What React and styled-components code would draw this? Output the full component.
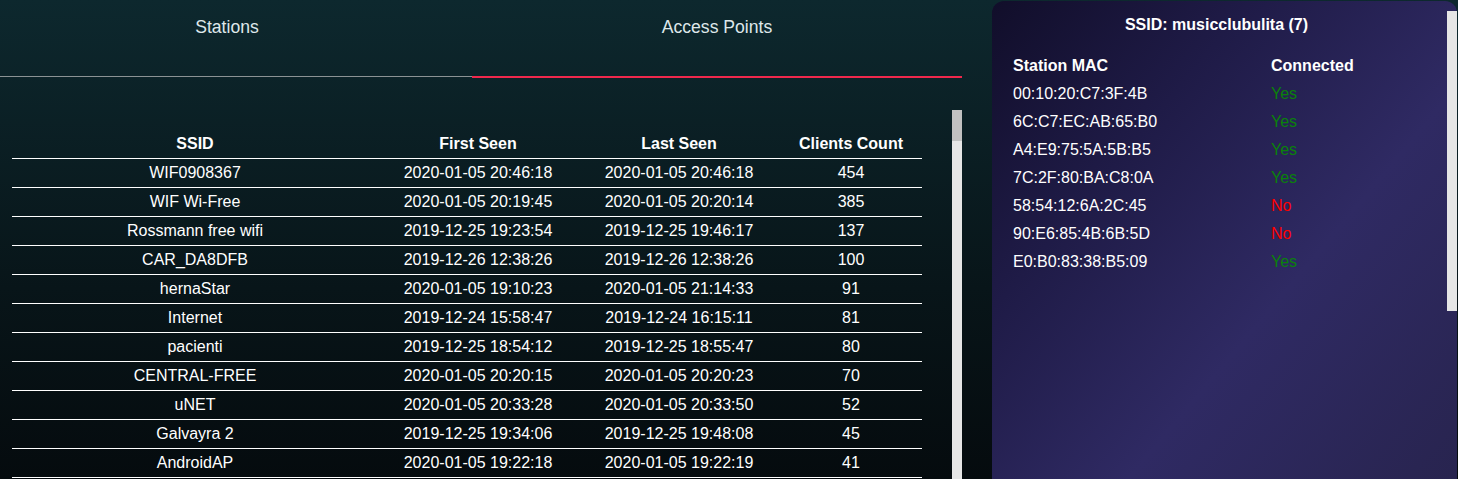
import React from "react";
import styled, { createGlobalStyle } from "styled-components";

const Global = createGlobalStyle`
  html, body {
    margin: 0;
    padding: 0;
    height: 479px;
    overflow: hidden;
  }
  body {
    background: linear-gradient(to bottom, #0d282e 0%, #081519 60%, #050b0e 100%);
    font-family: "Liberation Sans", Arial, sans-serif;
    color: #ffffff;
  }
`;

const Page = styled.div`
  display: flex;
  align-items: flex-start;
  height: 479px;
`;

const Main = styled.div`
  width: 962px;
  display: flex;
  flex-direction: column;
  height: 479px;
`;

const TabBar = styled.div`
  display: grid;
  grid-template-columns: 472px 490px;
  align-items: start;
`;

const Tab = styled.div`
  box-sizing: border-box;
  height: ${(p) => (p.$active ? 78 : 77)}px;
  padding-top: 17px;
  padding-right: ${(p) => p.$shift || 0}px;
  display: flex;
  justify-content: center;
  align-items: flex-start;
  font-size: 17.6px;
  line-height: 20px;
  color: #dfe7ea;
  border-bottom: ${(p) => (p.$active ? "2px solid #f0284c" : "1px solid #8b9294")};
`;

const TableArea = styled.div`
  margin-top: 32px;
  padding-left: 12px;
  display: flex;
  flex: 1;
  min-height: 0;
`;

const TableWrap = styled.div`
  flex: 1;
  padding-top: 18px;
  overflow: hidden;
`;

const Table = styled.table`
  width: 910px;
  border-collapse: collapse;
  table-layout: fixed;
  font-size: 16px;
`;

const Th = styled.th`
  font-weight: bold;
  line-height: 18px;
  padding: 7px 0 5px;
  text-align: center;
  border-bottom: 1px solid #ffffff;
  color: #ffffff;
`;

const Td = styled.td`
  line-height: 18px;
  padding: 5px 0 5px;
  text-align: center;
  border-bottom: 1px solid #ffffff;
  color: #ffffff;
  white-space: nowrap;
`;

const ScrollTrack = styled.div`
  width: 10px;
  background: #e6e6e6;
  display: flex;
  flex-direction: column;
`;

const ScrollThumb = styled.div`
  height: ${(p) => p.$size}px;
  background: #c1c1c1;
`;

const Panel = styled.div`
  margin-left: 30px;
  margin-top: 1px;
  width: 465px;
  height: 478px;
  border-radius: 12px 12px 0 0;
  background: linear-gradient(130deg, #110e2a 0%, #1f1b47 30%, #2f2a63 62%, #28244f 100%);
  display: flex;
`;

const PanelContent = styled.div`
  flex: 1;
  padding-left: 21px;
`;

const PanelTitle = styled.div`
  font-weight: bold;
  font-size: 16px;
  line-height: 18px;
  padding-top: 15px;
  text-align: center;
  margin-left: -21px;
  padding-right: 6px;
  color: #ffffff;
`;

const MacList = styled.div`
  margin-top: 23px;
  display: grid;
  grid-template-columns: 258px 1fr;
  grid-auto-rows: 28px;
  font-size: 16px;
  line-height: 18px;
`;

const HeadCell = styled.div`
  font-weight: bold;
  color: #ffffff;
`;

const MacCell = styled.div`
  color: #ffffff;
`;

const StatusCell = styled.div`
  color: ${(p) => (p.$ok ? "#0a820a" : "#ff0000")};
`;

const PanelScroll = styled.div`
  width: 10px;
  height: 300px;
  margin-top: 10px;
  background: #e6e6e6;
`;

const aps = [
  ["WIF0908367", "2020-01-05 20:46:18", "2020-01-05 20:46:18", 454],
  ["WIF Wi-Free", "2020-01-05 20:19:45", "2020-01-05 20:20:14", 385],
  ["Rossmann free wifi", "2019-12-25 19:23:54", "2019-12-25 19:46:17", 137],
  ["CAR_DA8DFB", "2019-12-26 12:38:26", "2019-12-26 12:38:26", 100],
  ["hernaStar", "2020-01-05 19:10:23", "2020-01-05 21:14:33", 91],
  ["Internet", "2019-12-24 15:58:47", "2019-12-24 16:15:11", 81],
  ["pacienti", "2019-12-25 18:54:12", "2019-12-25 18:55:47", 80],
  ["CENTRAL-FREE", "2020-01-05 20:20:15", "2020-01-05 20:20:23", 70],
  ["uNET", "2020-01-05 20:33:28", "2020-01-05 20:33:50", 52],
  ["Galvayra 2", "2019-12-25 19:34:06", "2019-12-25 19:48:08", 45],
  ["AndroidAP", "2020-01-05 19:22:18", "2020-01-05 19:22:19", 41],
];

const stations = [
  ["00:10:20:C7:3F:4B", true],
  ["6C:C7:EC:AB:65:B0", true],
  ["A4:E9:75:5A:5B:B5", true],
  ["7C:2F:80:BA:C8:0A", true],
  ["58:54:12:6A:2C:45", false],
  ["90:E6:85:4B:6B:5D", false],
  ["E0:B0:83:38:B5:09", true],
];

export default function App() {
  return (
    <>
      <Global />
      <Page>
        <Main>
          <TabBar>
            <Tab $shift={18}>Stations</Tab>
            <Tab $active>Access Points</Tab>
          </TabBar>
          <TableArea>
            <TableWrap>
              <Table>
                <colgroup>
                  <col style={{ width: 366 }} />
                  <col style={{ width: 200 }} />
                  <col style={{ width: 202 }} />
                  <col style={{ width: 142 }} />
                </colgroup>
                <thead>
                  <tr>
                    <Th>SSID</Th>
                    <Th>First Seen</Th>
                    <Th>Last Seen</Th>
                    <Th>Clients Count</Th>
                  </tr>
                </thead>
                <tbody>
                  {aps.map((r) => (
                    <tr key={r[0]}>
                      <Td>{r[0]}</Td>
                      <Td>{r[1]}</Td>
                      <Td>{r[2]}</Td>
                      <Td>{r[3]}</Td>
                    </tr>
                  ))}
                </tbody>
              </Table>
            </TableWrap>
            <ScrollTrack>
              <ScrollThumb $size={31} />
            </ScrollTrack>
          </TableArea>
        </Main>
        <Panel>
          <PanelContent>
            <PanelTitle>SSID: musicclubulita (7)</PanelTitle>
            <MacList>
              <HeadCell>Station MAC</HeadCell>
              <HeadCell>Connected</HeadCell>
              {stations.map(([mac, ok]) => (
                <React.Fragment key={mac}>
                  <MacCell>{mac}</MacCell>
                  <StatusCell $ok={ok}>{ok ? "Yes" : "No"}</StatusCell>
                </React.Fragment>
              ))}
            </MacList>
          </PanelContent>
          <PanelScroll />
        </Panel>
      </Page>
    </>
  );
}
